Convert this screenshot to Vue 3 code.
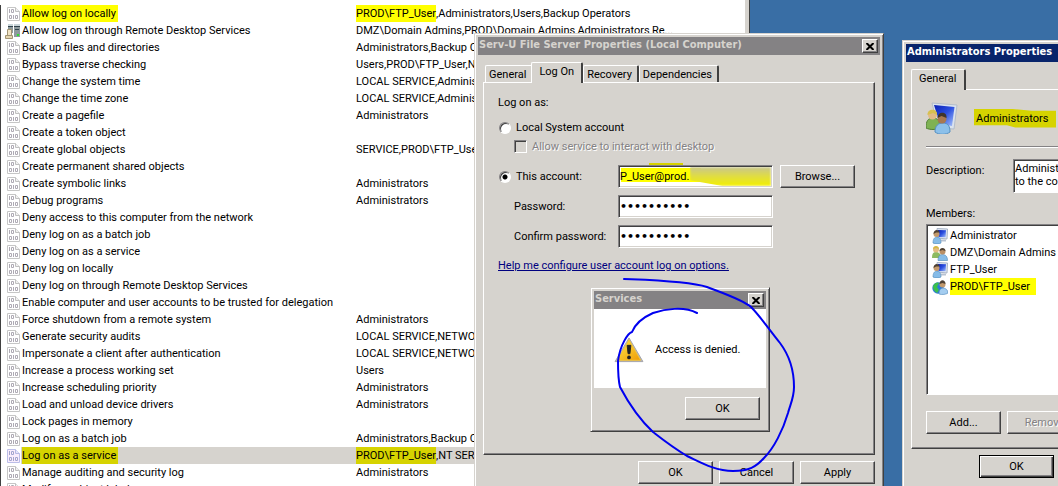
<script setup>
import { ref } from 'vue'

const policies = [
  { name: 'Allow log on locally', marked: true, user: 'PROD\\FTP_User', rest: ',Administrators,Users,Backup Operators' },
  { name: 'Allow log on through Remote Desktop Services', server: true, rest: 'DMZ\\Domain Admins,PROD\\Domain Admins,Administrators,Re...' },
  { name: 'Back up files and directories', rest: 'Administrators,Backup Operators' },
  { name: 'Bypass traverse checking', rest: 'Users,PROD\\FTP_User,NETWORK' },
  { name: 'Change the system time', rest: 'LOCAL SERVICE,Administrators' },
  { name: 'Change the time zone', rest: 'LOCAL SERVICE,Administrators' },
  { name: 'Create a pagefile', rest: 'Administrators' },
  { name: 'Create a token object', rest: '' },
  { name: 'Create global objects', rest: 'SERVICE,PROD\\FTP_User' },
  { name: 'Create permanent shared objects', rest: '' },
  { name: 'Create symbolic links', rest: 'Administrators' },
  { name: 'Debug programs', rest: 'Administrators' },
  { name: 'Deny access to this computer from the network', rest: '' },
  { name: 'Deny log on as a batch job', rest: '' },
  { name: 'Deny log on as a service', rest: '' },
  { name: 'Deny log on locally', rest: '' },
  { name: 'Deny log on through Remote Desktop Services', rest: '' },
  { name: 'Enable computer and user accounts to be trusted for delegation', rest: '' },
  { name: 'Force shutdown from a remote system', rest: 'Administrators' },
  { name: 'Generate security audits', rest: 'LOCAL SERVICE,NETWORK' },
  { name: 'Impersonate a client after authentication', rest: 'LOCAL SERVICE,NETWORK' },
  { name: 'Increase a process working set', rest: 'Users' },
  { name: 'Increase scheduling priority', rest: 'Administrators' },
  { name: 'Load and unload device drivers', rest: 'Administrators' },
  { name: 'Lock pages in memory', rest: '' },
  { name: 'Log on as a batch job', rest: 'Administrators,Backup Operators' },
  { name: 'Log on as a service', marked: true, selected: true, user: 'PROD\\FTP_User', rest: ',NT SERVICE' },
  { name: 'Manage auditing and security log', rest: 'Administrators' },
  { name: 'Modify an object label', rest: '' }
]

const tabs = ['General', 'Log On', 'Recovery', 'Dependencies']
const members = [
  { name: 'Administrator', icon: 'user' },
  { name: 'DMZ\\Domain Admins', icon: 'group' },
  { name: 'FTP_User', icon: 'user' },
  { name: 'PROD\\FTP_User', icon: 'globe', marked: true }
]

const logon = ref('account')
const account = ref('P_User@prod.')
const password = ref('0123456789')
const confirm = ref('0123456789')
const description = ref('Administrators have complete\nto the computer/domain')
</script>

<template>
  <main class="desktop">
    <svg class="defs" aria-hidden="true">
      <defs>
        <linearGradient id="screen" x1="0" y1="0" x2="1" y2="1">
          <stop offset="0" stop-color="#0a1fb4" /><stop offset=".5" stop-color="#2c50e0" /><stop offset="1" stop-color="#a9c4fb" />
        </linearGradient>
        <linearGradient id="amber" x1="0" y1="0" x2="1" y2="1">
          <stop offset="0" stop-color="#ffe94a" /><stop offset="1" stop-color="#ee9a05" />
        </linearGradient>
        <symbol id="binary" viewBox="0 0 13 14">
          <path d="M.5.5h8l4 4v9H.5z" fill="#fff" stroke="#c6c6c6" />
          <path d="M8.500 .5v4h4" fill="#f0f0f0" stroke="#c0c0c0" />
          <path d="M2.500 2v4M4.500 2.500h2v3h-2zM2.500 8.500h2v3h-2zM6.500 8v4M8.500 8.500h2v3h-2z" fill="none" stroke="#aeaab4" />
        </symbol>
        <symbol id="server" viewBox="0 0 16 16">
          <path d="M3 1h5v9H3zM9 1h6v13H9z" fill="#8e9a9c" />
          <path d="M3 1h5v2H3zM9 1h6v2H9z" fill="#c8d4d8" />
          <path d="M3 3.500h5M9 3.500h6M10 6.500h4" stroke="#30424c" />
          <path d="M2.500 6.500h4v6h-4z" fill="#f2e4c4" stroke="#a39574" />
          <path d="M.5 12.500h7v3h-7z" fill="#e4d5b0" stroke="#a39574" />
          <path d="M12 11h2v2h-2z" fill="#2ee02e" />
        </symbol>
        <symbol id="user" viewBox="0 0 16 16">
          <path d="M5 .5 15.500 1 15 11 5.500 10z" fill="#dfe6f2" stroke="#a8b4c6" />
          <path d="M6 2l8 .3-.4 7L6.500 9z" fill="url(#screen)" />
          <path d="M9 11.500h5v2H8z" fill="#b9c3d2" />
          <path d="M1 15c0-4 1.500-6 4-6s4 2 4 6c-2 1.300-6 1.300-8 0z" fill="#86bce8" stroke="#4c86b8" stroke-width=".6" />
          <circle cx="4.500" cy="6" r="3" fill="#c39a6d" />
          <path d="M1.500 6c0-5 6-5 6-1.500L4 4.500z" fill="#4d4033" />
        </symbol>
        <symbol id="group" viewBox="0 0 16 16">
          <path d="M0 13c0-4 1-6 4-6s5 2 5 6z" fill="#8dbb62" />
          <circle cx="4" cy="4.500" r="3" fill="#e3bd83" />
          <path d="M1 4c0-4 6-4 6 0L4 3z" fill="#d5b743" />
          <path d="M6 15.500c0-4 1.500-6 4.500-6s5 2 5 6z" fill="#86bce8" stroke="#4c86b8" stroke-width=".6" />
          <circle cx="10.500" cy="6.500" r="3" fill="#b98f66" />
          <path d="M7.500 6c0-4 6-4 6 0l-3-1z" fill="#4d4033" />
        </symbol>
        <symbol id="globe" viewBox="0 0 16 16">
          <circle cx="6" cy="9" r="5.700" fill="#2d7ad8" />
          <path d="M1 7c2-4 5-4 6-3L5 8l2 3-2 3C2 12 1 10 1 7z" fill="#3cc04c" />
          <path d="M7 15c0-4 1.500-6 4-6s5 2 5 5c-2 1.500-6 2-9 1z" fill="#a4cdf0" stroke="#4c86b8" stroke-width=".6" />
          <circle cx="10.500" cy="5.500" r="3" fill="#c39a6d" />
          <path d="M7.500 5c0-5 6-5 6 0l-3-1z" fill="#4d4033" />
        </symbol>
      </defs>
    </svg>

    <section class="policy-window" aria-label="User rights assignment">
      <table class="policies">
        <tbody>
          <tr v-for="p in policies" :key="p.name" :class="{ selected: p.selected }">
            <td class="icon"><svg v-if="p.server" width="16" height="16"><use href="#server" /></svg><svg v-else width="13" height="14"><use href="#binary" /></svg></td>
            <td class="name"><span :class="{ mark: p.marked }">{{ p.name }}</span></td>
            <td><span v-if="p.user" class="mark">{{ p.user }}</span>{{ p.rest }}</td>
          </tr>
        </tbody>
      </table>
    </section>

    <section class="dialog service" aria-label="Serv-U File Server Properties">
      <header class="title"><h2>Serv-U File Server Properties (Local Computer)</h2>
        <button class="close" aria-label="Close"><svg width="8" height="7" viewBox="0 0 8 7"><path d="M.5 0 7.500 7M7.500 0 .5 7" /></svg></button>
      </header>
      <div class="body">
        <nav class="tabs"><button v-for="t in tabs" :key="t" class="tab" :class="{ active: t === 'Log On' }">{{ t }}</button></nav>
        <div class="panel logon">
          <p class="lead">Log on as:</p>
          <label class="option"><input v-model="logon" type="radio" value="system" class="radio">Local System account</label>
          <label class="option nested"><input type="checkbox" class="check" disabled>Allow service to interact with desktop</label>
          <div class="fields">
            <label class="option"><input v-model="logon" type="radio" value="account" class="radio">This account:</label>
            <div class="account">
              <input v-model="account" class="text" aria-label="Account name">
              <span class="smear"></span>
            </div>
            <button class="btn">Browse...</button>
            <label class="caption" for="pw">Password:</label>
            <input id="pw" v-model="password" type="password" class="text secret">
            <label class="caption" for="pw2">Confirm password:</label>
            <input id="pw2" v-model="confirm" type="password" class="text secret">
          </div>
          <a class="help" href="#">Help me configure user account log on options.</a>
        </div>
        <footer class="actions"><button class="btn">OK</button><button class="btn">Cancel</button><button class="btn">Apply</button></footer>
      </div>
    </section>

    <section class="dialog message" role="alertdialog" aria-label="Services">
      <header class="title"><h2>Services</h2>
        <button class="close" aria-label="Close"><svg width="8" height="7" viewBox="0 0 8 7"><path d="M.5 0 7.500 7M7.500 0 .5 7" /></svg></button>
      </header>
      <div class="notice">
        <svg width="30" height="26" viewBox="0 0 32 28" aria-hidden="true">
          <path d="M16 1 31 26.500H1z" fill="#b9b9bd" stroke="#a0a0a6" stroke-linejoin="round" />
          <path d="M16 3 28.500 25h-25z" fill="url(#amber)" stroke="#f5c32c" stroke-linejoin="round" />
          <path d="M14 9h4l-1 9h-2z" fill="#222" stroke="#222" stroke-linejoin="round" />
          <circle cx="16" cy="22" r="2" fill="#222" />
        </svg>
        <p>Access is denied.</p>
      </div>
      <footer class="confirm"><button class="btn">OK</button></footer>
    </section>

    <section class="dialog admins" aria-label="Administrators Properties">
      <header class="title current"><h2>Administrators Properties</h2></header>
      <div class="body">
        <nav class="tabs"><button class="tab active">General</button></nav>
        <div class="panel">
          <div class="identity">
            <svg width="32" height="32" viewBox="0 0 32 32" aria-hidden="true">
              <path d="M6 1 31 3 28 27 12 26z" fill="#dbe3ee" stroke="#b3bdca" />
              <path d="M8 3l20.500 2L26 24l-12-2z" fill="url(#screen)" />
              <path d="M0 26c0-7 2-10 7-10s7 3 7 10c-4 2-10 2-14 0z" fill="#7fb254" stroke="#517f35" />
              <circle cx="6.500" cy="13" r="4.500" fill="#e2bb84" />
              <path d="M1.500 13C1 6 12 6 11 13L7 11z" fill="#d8c04f" />
              <path d="M9 30c0-6 3-9 8-9s7 3 7 9c-4 3-11 3-15 0z" fill="#8cc0ea" stroke="#5590c2" />
              <circle cx="16" cy="17" r="4.500" fill="#a87850" />
              <path d="M11.500 16c0-7 10-7 9 0l-5-2z" fill="#40352b" />
            </svg>
            <span class="mark">Administrators</span>
          </div>
          <div class="description">
            <label for="desc">Description:</label>
            <textarea id="desc" v-model="description" rows="2"></textarea>
          </div>
          <p class="members-label">Members:</p>
          <ul class="members">
            <li v-for="m in members" :key="m.name"><svg width="16" height="16" aria-hidden="true"><use :href="'#' + m.icon" /></svg><span :class="{ mark: m.marked }">{{ m.name }}</span></li>
          </ul>
          <div class="row"><button class="btn">Add...</button><button class="btn" disabled>Remove</button></div>
        </div>
        <footer class="actions"><button class="btn default">OK</button></footer>
      </div>
    </section>

    <svg class="ink" width="184" height="200" viewBox="614 275 184 200" aria-hidden="true">
      <path d="M624 279C648 280 688 281 707 287C725 294 743 300 751 307C760 316 768 328 780 343C789 355 794 370 794 387C794 398 790 405 788 413C783 430 774 448 764 458C756 467 749 471 733 471C715 471 700 462 687 456C672 447 662 439 653 432C639 419 629 404 620 387C618 379 618 369 618 361C620 345 628 333 632 332C636 322 644 317 653 313C665 309 684 306 697 313" />
    </svg>
  </main>
</template>

<style>
html, body { background: #396ea5; }
</style>

<style scoped>
* { box-sizing: border-box; }
.desktop { position: relative; height: 100vh; overflow: hidden; background: #396ea5; font: 11px/17px Roboto, "DejaVu Sans Condensed", sans-serif; color: #000; }
.defs { position: absolute; width: 0; height: 0; }
h2, p, ul { margin: 0; padding: 0; }
button, input, textarea { font: inherit; color: inherit; border-radius: 0; }
svg { flex: none; }

.policy-window { position: absolute; left: 0; top: 0; width: 749px; padding-top: 5px; background: #fff; border-right: 4px solid #d6d3ce; }
.policy-window::after { content: ""; position: absolute; top: 0; bottom: 0; right: -5px; width: 1px; background: #404040; }
.policies { width: 100%; border-collapse: separate; border-spacing: 0; table-layout: fixed; border-left: 1px solid #404040; }
.policies td { height: 17px; padding: 0; white-space: nowrap; }
.policies .icon { width: 20px; padding-left: 6px; vertical-align: middle; }
.policies .icon svg { display: block; }
.policies .icon svg[width="16"] { margin-left: -2px; }
.policies .name { width: 335px; padding-left: 1px; }
.policies .name .mark { padding-right: 2px; }
.selected td:not(.icon) { background: #d6d3ce; }
.selected .icon svg { filter: brightness(.8) sepia(1) hue-rotate(200deg) saturate(.8); }
.mark { display: inline-block; background: #ff0; }
.selected .mark { background: #d6d300; }

.dialog { position: absolute; background: #d6d3ce; border: 1px solid; border-color: #d6d3ce #404040 #404040 #d6d3ce; box-shadow: inset 1px 1px #fff, inset -1px -1px #848284; padding: 3px; }
.service { left: 474px; top: 33px; width: 410px; }
.message { left: 590px; top: 287px; width: 180px; }
.admins { left: 902px; top: 40px; width: 410px; }
.title { display: flex; align-items: center; justify-content: space-between; height: 18px; padding: 0 2px 0 1px; background: #848284; color: #d6d3ce; }
.title.current { background: #08246b; color: #fff; }
.title h2 { padding-bottom: 2px; font: bold 11px/16px "DejaVu Sans Condensed", sans-serif; white-space: nowrap; }
.close { display: grid; place-items: center; width: 16px; height: 14px; padding: 0; background: #d6d3ce; border: 1px solid; border-color: #fff #404040 #404040 #fff; box-shadow: inset -1px -1px #848284; }
.close path { stroke: #000; stroke-width: 2; }

.body { padding: 7px 5px 0; }
.tabs { display: flex; align-items: flex-end; height: 21px; padding-left: 2px; }
.tab { height: 17px; margin-bottom: 1px; padding: 0 5px 0 3px; line-height: 15px; background: #d6d3ce; border: solid; border-width: 1px 2px 0 1px; border-color: #fff #404040 #fff #fff; border-radius: 2px 2px 0 0; white-space: nowrap; }
.tab.active { position: relative; height: 21px; margin: 0 0 0 -2px; padding: 0 7px 3px; }
.panel { border: 1px solid; border-color: #fff #404040 #404040 #fff; box-shadow: inset -1px -1px #848284; margin-top: -1px; }
.logon { height: 373px; padding: 11px 20px 0 14px; }
.option { display: flex; align-items: center; white-space: nowrap; }
.lead { margin-bottom: 8px; }
.radio { appearance: none; flex: none; width: 12px; height: 12px; margin: 0 5px 0 1px; border: 1px solid; border-color: #848284 #fff #fff #848284; border-radius: 50%; background: #fff; box-shadow: inset 1px 1px #404040; }
.radio:checked { background: radial-gradient(circle, #000 2px, #fff 3px); }
.nested { margin: 2px 0 0 16px; color: #848284; text-shadow: 1px 1px #fff; }
.check { appearance: none; width: 13px; height: 13px; margin: 0 5px 0 0; background: #d6d3ce; border: 1px solid; border-color: #848284 #fff #fff #848284; box-shadow: inset 1px 1px #404040; }
.fields { display: grid; grid-template-columns: 120px 155px auto; row-gap: 7px; margin-top: 10px; align-items: center; }
.fields .btn { margin-left: 7px; }
.caption { grid-column: 1; padding-left: 16px; white-space: nowrap; }
.text { display: block; width: 100%; height: 23px; padding: 0 1px; background: #fff; border: 1px solid; border-color: #848284 #fff #fff #848284; box-shadow: inset 1px 1px #404040, inset -1px -1px #d6d3ce; outline: 0; }
.secret { font: bold 11px/17px "DejaVu Sans", sans-serif; }
.account { position: relative; }
.account .text { background: linear-gradient(#ff0, #ff0) 2px 2px / 80px 14px no-repeat #fff; }
.account::before { content: ""; position: absolute; left: 31px; top: -2px; width: 34px; height: 2px; background: #d6d300; }
.smear { position: absolute; left: 72px; top: 2px; width: 81px; height: 19px; background: linear-gradient(#c9c690, #dedb48 45%, #f4f000); clip-path: polygon(0 0, 100% 0, 100% 100%, 40% 100%, 0 70%); filter: blur(1px); }
.help { display: inline-block; margin-top: 9px; color: #000080; white-space: nowrap; }
.btn { width: 75px; height: 23px; padding: 0; background: #d6d3ce; border: 1px solid; border-color: #fff #404040 #404040 #fff; box-shadow: inset -1px -1px #848284; }
.btn:disabled { color: #848284; text-shadow: 1px 1px #fff; }
.btn.default { border-color: #000; box-shadow: inset 1px 1px #fff, inset -1px -1px #404040, inset -2px -2px #848284; }
.actions { display: flex; justify-content: flex-end; gap: 6px; padding: 6px 0 7px; }

.notice { display: flex; align-items: center; gap: 11px; height: 79px; padding: 2px 0 0 20px; background: #fff; }
.confirm { display: flex; justify-content: flex-end; padding: 9px 6px 8px; }

.admins .panel { padding: 12px 14px 14px; }
.admins .tab.active { padding-right: 8px; }
.identity { display: flex; align-items: center; gap: 16px; padding-bottom: 12px; border-bottom: 1px solid #848284; box-shadow: 0 1px #fff; }
.identity .mark { padding: 1px 8px 1px 2px; background: #d6d300; clip-path: polygon(0 0, 40% 0, 70% 12%, 100% 12%, 100% 100%, 50% 100%, 40% 88%, 0 88%); }
.description { display: flex; gap: 8px; margin-top: 12px; }
.description label { width: 79px; padding-top: 3px; }
.description textarea { flex: 1; height: 34px; padding: 2px 1px; line-height: 13px; resize: none; overflow: hidden; background: #fff; border: 1px solid; border-color: #848284 #fff #fff #848284; box-shadow: inset 1px 1px #404040; outline: 0; }
.members-label { margin: 12px 0 2px; }
.members { height: 171px; padding: 2px 5px; list-style: none; background: #fff; border: 1px solid; border-color: #848284 #fff #fff #848284; box-shadow: inset 1px 1px #404040; }
.members li { display: flex; align-items: center; gap: 2px; height: 17px; }
.members .mark { padding-right: 6px; }
.row { display: flex; gap: 6px; margin-top: 16px; }
.admins .actions { justify-content: flex-start; padding-left: 68px; }

.ink { position: absolute; left: 614px; top: 275px; pointer-events: none; }
.ink path { fill: none; stroke: #0000f0; stroke-width: 2; stroke-linecap: round; stroke-linejoin: round; }
</style>
